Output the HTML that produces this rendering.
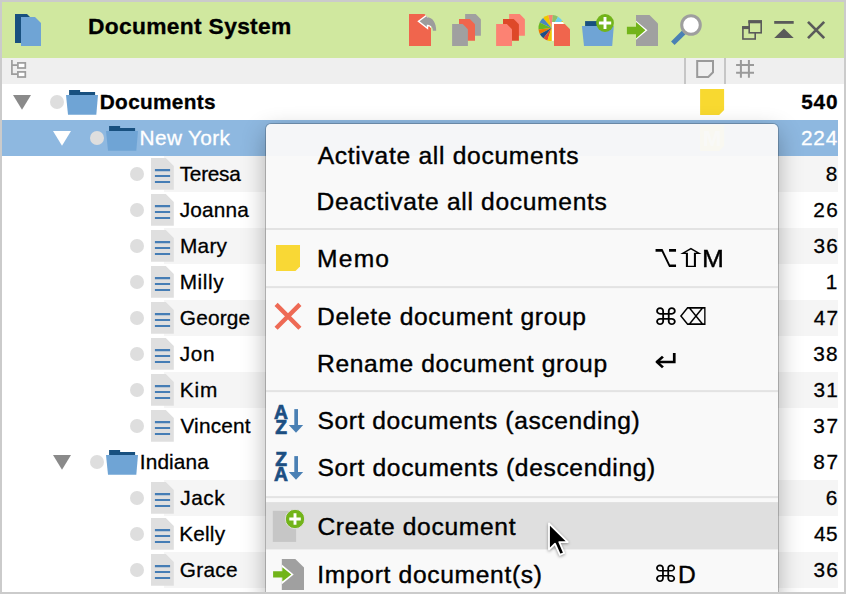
<!DOCTYPE html>
<html><head><meta charset="utf-8"><title>Document System</title>
<style>
html,body{margin:0;padding:0;}
body{width:846px;height:594px;background:#cbcbcb;position:relative;overflow:hidden;font-family:"Liberation Sans",sans-serif;color:#000;}
#win{position:absolute;left:2px;top:2px;width:842px;height:590px;background:#fff;overflow:hidden;}
#hdr{position:absolute;left:0;top:0;width:842px;height:56px;background:#d0e89f;}
#title{position:absolute;top:11px;-webkit-text-stroke:0.3px;font-weight:bold;font-size:22.8px;line-height:26px;white-space:nowrap;}
#cols{position:absolute;left:0;top:56px;width:842px;height:26px;background:#efefef;}
.row{position:absolute;left:0;width:836px;height:36px;}
.alt{position:absolute;top:0;height:36px;background:#f5f5f5;}
.sel{background:#8eb8e0;}
.t{position:absolute;-webkit-text-stroke:0.3px;font-size:20.8px;line-height:36px;top:0px;white-space:nowrap;}
.n{position:absolute;top:0px;-webkit-text-stroke:0.3px;font-size:20.8px;line-height:36px;white-space:nowrap;}
.b{font-weight:bold;}
.w{color:#fff;}
.dot{position:absolute;width:14px;height:14px;border-radius:7px;background:#dedede;top:11px;}
svg{position:absolute;overflow:visible;}
#menu{position:absolute;left:264px;top:122px;width:512px;height:480px;background:rgba(249,249,249,0.96);border-radius:5px;box-shadow:0 0 0 1px rgba(0,0,0,0.20),0 8px 24px rgba(0,0,0,0.30);}
.mi{position:absolute;-webkit-text-stroke:0.4px #000;font-size:24.6px;line-height:30px;white-space:nowrap;}
.sc{position:absolute;left:390px;font-size:24.5px;line-height:30px;white-space:nowrap;font-family:"Liberation Sans","DejaVu Sans",sans-serif;}
.gl{position:absolute;display:inline-block;font-family:"DejaVu Sans",sans-serif;font-size:24px;line-height:30px;transform-origin:0 0;white-space:nowrap;}
.sep{position:absolute;left:0;width:512px;height:2px;background:#e3e3e3;}
.hl{position:absolute;left:0;width:512px;background:#dcdcdc;}
</style></head><body>
<div id="win">
<div id="hdr">
<div id="title" class="" style="left:85.96px;letter-spacing:0.318px;">Document System</div>
<svg id="tb" width="842" height="56" viewBox="2 2 842 56" style="left:0;top:0">
<path d="M15 14h12l3 3v26h-15z" fill="#18507f"/><path d="M21 17h14l6 6v23h-20z" fill="#6fa4d5"/>
<defs><clipPath id="cp1"><path d="M409 14H424.5L431 20.5V45.9H409Z"/></clipPath><clipPath id="cp4"><circle cx="551.5" cy="28" r="13.1"/></clipPath></defs>
<path d="M409 14H424.5L431 20.5V45.9H409Z" fill="#f0654d"/>
<g clip-path="url(#cp1)"><path d="M419.6 21.3L426.8 16V17.2C432.6 17.2 436.2 22.5 436.2 30.7H432.9C432.9 27 430.6 24.7 426.8 24.7V26.9Z" fill="#fff" stroke="#fff" stroke-width="2.8"/></g>
<path d="M419.6 21.3L426.8 16V17.2C432.6 17.2 436.2 22.5 436.2 30.7H432.9C432.9 27 430.6 24.7 426.8 24.7V26.9Z" fill="#9c9c9c"/>
<path d="M465.1 14h10.6l5.2 5.2v16.6h-15.8z" fill="#a0a0a0"/>
<path d="M459 19h10.8l5.2 5.2v16.6h-16z" fill="#f0654d"/>
<path d="M452.1 24.1h10.6l5.2 5.2v16.6h-15.8z" fill="#a0a0a0"/>
<path d="M509.1 14h10.6l5.2 5.2v16.6h-15.8z" fill="#fc8273"/>
<path d="M503 19h10.7l5.2 5.2v16.6h-15.9z" fill="#de4829"/>
<path d="M496.1 24.1h10.7l5.2 5.2v16.6h-15.9z" fill="#fc8273"/>
<path d="M551.5 28L548.11 15.35A13.1 13.1 0 0 1 552.87 14.97z" fill="#fa8072"/>
<path d="M551.5 28L552.87 14.97A13.1 13.1 0 0 1 558.05 16.66z" fill="#8fc065"/>
<path d="M551.5 28L558.05 16.66A13.1 13.1 0 0 1 562.61 21.06z" fill="#6ccff0"/>
<path d="M551.5 28L562.61 21.06A13.1 13.1 0 0 1 551.50 41.10z" fill="#f2c500"/>
<path d="M551.5 28L543.08 17.96A13.1 13.1 0 0 1 548.11 15.35z" fill="#f2c500"/>
<path d="M551.5 28L539.63 22.46A13.1 13.1 0 0 1 543.08 17.96z" fill="#4a86c0"/>
<path d="M551.5 28L538.50 29.60A13.1 13.1 0 0 1 539.63 22.46z" fill="#6ab820"/>
<path d="M551.5 28L539.83 33.95A13.1 13.1 0 0 1 538.50 29.60z" fill="#f07800"/>
<path d="M551.5 28L543.43 38.32A13.1 13.1 0 0 1 539.83 33.95z" fill="#1d4f88"/>
<path d="M551.5 28L547.45 40.46A13.1 13.1 0 0 1 543.43 38.32z" fill="#e04830"/>
<path d="M551.5 28L551.50 41.10A13.1 13.1 0 0 1 547.45 40.46z" fill="#f2c500"/>
<g clip-path="url(#cp4)"><path d="M551.9 22h13.2l7 7v18h-20.2z" fill="#fff"/></g>
<path d="M554 24.1h10.8l5.2 5.2v16.6h-16z" fill="#f0654d"/>
<path d="M585.1 21.1h14v5h-14z" fill="#18507f"/><path d="M581.9 26h31.9l-1.6 19.9h-28.2z" fill="#6fa4d5"/>
<circle cx="605" cy="23" r="8.9" fill="#72b41a"/><path d="M605 17v12.1M598.9 23h12.3" stroke="#fff" stroke-width="2.9"/>
<path d="M636 15h13.5l8.5 8.5v22.4h-22z" fill="#a0a0a0"/>
<path d="M636 20.7L647.5 30.3L636 39.8z" fill="#fff"/>
<path d="M626.9 26.7h9.1v-4.7l9.4 8.3l-9.4 8.2v-4.3h-9.1z" fill="#72b41a"/>
<path d="M683.8 32.4l-11 10.9" stroke="#4a80b4" stroke-width="5"/><circle cx="691" cy="25" r="9.3" fill="#fff" stroke="#9e9e9e" stroke-width="3"/>
<g fill="#d0e89f" stroke="#5a5a5a" stroke-width="1.6"><rect x="742.9" y="27" width="12.3" height="12"/><path d="M742.1 27.6h14" stroke-width="3"/><rect x="749.2" y="21.1" width="12" height="11.7"/><path d="M748.4 21.8h13.6" stroke-width="3"/></g>
<path d="M774.2 22.4h19.5" stroke="#5a5a5a" stroke-width="2.8"/><path d="M774.2 38h19.5l-9.75-9.4z" fill="#5a5a5a"/>
<path d="M808 21.9l16.2 16.2M824.2 21.9l-16.2 16.2" stroke="#5a5a5a" stroke-width="2.7"/>
</svg>
</div>
<div id="cols"><svg width="842" height="26" viewBox="2 58 842 26" style="left:0;top:0">
<g fill="none" stroke="#9c9c9c" stroke-width="1.7"><path d="M11.9 60.1v14.1h5.2M11.9 65.2h5.2"/><rect x="17.9" y="62.9" width="7.4" height="5.1" fill="#fff"/><rect x="17.9" y="71.9" width="7.4" height="5.1" fill="#fff"/></g>
<path d="M685 58v26M725 58v26" stroke="#c6c6c6" stroke-width="2"/>
<path d="M697.2 61h15.8v11.3l-4.7 4.6h-11.1z" fill="none" stroke="#9a9a9a" stroke-width="2"/>
<path d="M740.9 60v17.8M748.9 60v17.8M736.1 65h17.9M736.1 72.8h17.9" stroke="#9a9a9a" stroke-width="2" fill="none"/>
</svg></div>
<div class="row" style="top:82px">
<svg width="18" height="36" style="left:11.1px;top:0"><path d="M0 10.9h18l-9 14.8z" fill="#8a8a8a"/></svg>
<div class="dot" style="left:48.4px"></div>
<svg width="34" height="36" style="left:63.9px;top:0"><path d="M3.1 6h11v2h15v3.5h-26z" fill="#18507f"/><path d="M0 10.9h32l-1.7 19.9h-28.3z" fill="#6fa4d5"/></svg>
<div class="t b" style="left:97.77px;letter-spacing:0.321px;">Documents</div>
<div class="n b" style="left:799.15px;letter-spacing:0.904px;">540</div>
</div>
<div class="row sel" style="top:118px">
<svg width="18" height="36" style="left:51.0px;top:0"><path d="M0 10.9h18l-9 14.8z" fill="#fff"/></svg>
<div class="dot" style="left:88.4px"></div>
<svg width="34" height="36" style="left:103.6px;top:0"><path d="M3.1 6h11v2h15v3.5h-26z" fill="#18507f"/><path d="M0 10.9h32l-1.7 19.9h-28.3z" fill="#6fa4d5"/></svg>
<div class="t w" style="left:137.6px;letter-spacing:0.353px;">New York</div>
<div class="n w" style="left:799.07px;letter-spacing:0.718px;">224</div>
</div>
<div class="row" style="top:154px">
<div class="alt" style="left:162.3px;width:673.7px"></div>
<div class="dot" style="left:128.3px"></div>
<svg width="24" height="36" style="left:149.1px;top:0"><path d="M0 2.1h14.8l8 8v23.7h-22.8z" fill="#dfdfdf"/><path d="M3.9 14.1h15.2M3.9 20h15.2M3.9 26h15.2" stroke="#457db5" stroke-width="2.1"/></svg>
<div class="t" style="left:177.71px;letter-spacing:-0.259px;">Teresa</div>
<div class="n" style="left:823.65px;letter-spacing:0px;">8</div>
</div>
<div class="row" style="top:190px">
<div class="dot" style="left:128.3px"></div>
<svg width="24" height="36" style="left:149.1px;top:0"><path d="M0 2.1h14.8l8 8v23.7h-22.8z" fill="#dfdfdf"/><path d="M3.9 14.1h15.2M3.9 20h15.2M3.9 26h15.2" stroke="#457db5" stroke-width="2.1"/></svg>
<div class="t" style="left:177.69px;letter-spacing:0.184px;">Joanna</div>
<div class="n" style="left:811.21px;letter-spacing:1.457px;">26</div>
</div>
<div class="row" style="top:226px">
<div class="alt" style="left:162.3px;width:673.7px"></div>
<div class="dot" style="left:128.3px"></div>
<svg width="24" height="36" style="left:149.1px;top:0"><path d="M0 2.1h14.8l8 8v23.7h-22.8z" fill="#dfdfdf"/><path d="M3.9 14.1h15.2M3.9 20h15.2M3.9 26h15.2" stroke="#457db5" stroke-width="2.1"/></svg>
<div class="t" style="left:178.09px;letter-spacing:0.209px;">Mary</div>
<div class="n" style="left:811.39px;letter-spacing:1.329px;">36</div>
</div>
<div class="row" style="top:262px">
<div class="dot" style="left:128.3px"></div>
<svg width="24" height="36" style="left:149.1px;top:0"><path d="M0 2.1h14.8l8 8v23.7h-22.8z" fill="#dfdfdf"/><path d="M3.9 14.1h15.2M3.9 20h15.2M3.9 26h15.2" stroke="#457db5" stroke-width="2.1"/></svg>
<div class="t" style="left:177.63px;letter-spacing:0.632px;">Milly</div>
<div class="n" style="left:823.84px;letter-spacing:0px;">1</div>
</div>
<div class="row" style="top:298px">
<div class="alt" style="left:162.3px;width:673.7px"></div>
<div class="dot" style="left:128.3px"></div>
<svg width="24" height="36" style="left:149.1px;top:0"><path d="M0 2.1h14.8l8 8v23.7h-22.8z" fill="#dfdfdf"/><path d="M3.9 14.1h15.2M3.9 20h15.2M3.9 26h15.2" stroke="#457db5" stroke-width="2.1"/></svg>
<div class="t" style="left:177.84px;letter-spacing:0.176px;">George</div>
<div class="n" style="left:811.85px;letter-spacing:1.02px;">47</div>
</div>
<div class="row" style="top:334px">
<div class="dot" style="left:128.3px"></div>
<svg width="24" height="36" style="left:149.1px;top:0"><path d="M0 2.1h14.8l8 8v23.7h-22.8z" fill="#dfdfdf"/><path d="M3.9 14.1h15.2M3.9 20h15.2M3.9 26h15.2" stroke="#457db5" stroke-width="2.1"/></svg>
<div class="t" style="left:177.65px;letter-spacing:0.706px;">Jon</div>
<div class="n" style="left:811.37px;letter-spacing:1.062px;">38</div>
</div>
<div class="row" style="top:370px">
<div class="alt" style="left:162.3px;width:673.7px"></div>
<div class="dot" style="left:128.3px"></div>
<svg width="24" height="36" style="left:149.1px;top:0"><path d="M0 2.1h14.8l8 8v23.7h-22.8z" fill="#dfdfdf"/><path d="M3.9 14.1h15.2M3.9 20h15.2M3.9 26h15.2" stroke="#457db5" stroke-width="2.1"/></svg>
<div class="t" style="left:177.64px;letter-spacing:0.883px;">Kim</div>
<div class="n" style="left:811.39px;letter-spacing:1.266px;">31</div>
</div>
<div class="row" style="top:406px">
<div class="dot" style="left:128.3px"></div>
<svg width="24" height="36" style="left:149.1px;top:0"><path d="M0 2.1h14.8l8 8v23.7h-22.8z" fill="#dfdfdf"/><path d="M3.9 14.1h15.2M3.9 20h15.2M3.9 26h15.2" stroke="#457db5" stroke-width="2.1"/></svg>
<div class="t" style="left:178.39px;letter-spacing:0.204px;">Vincent</div>
<div class="n" style="left:811.37px;letter-spacing:1.461px;">37</div>
</div>
<div class="row" style="top:442px">
<svg width="18" height="36" style="left:51.0px;top:0"><path d="M0 10.9h18l-9 14.8z" fill="#8a8a8a"/></svg>
<div class="dot" style="left:88.4px"></div>
<svg width="34" height="36" style="left:103.6px;top:0"><path d="M3.1 6h11v2h15v3.5h-26z" fill="#18507f"/><path d="M0 10.9h32l-1.7 19.9h-28.3z" fill="#6fa4d5"/></svg>
<div class="t" style="left:137.82px;letter-spacing:0.131px;">Indiana</div>
<div class="n" style="left:811.37px;letter-spacing:1.463px;">87</div>
</div>
<div class="row" style="top:478px">
<div class="alt" style="left:162.3px;width:673.7px"></div>
<div class="dot" style="left:128.3px"></div>
<svg width="24" height="36" style="left:149.1px;top:0"><path d="M0 2.1h14.8l8 8v23.7h-22.8z" fill="#dfdfdf"/><path d="M3.9 14.1h15.2M3.9 20h15.2M3.9 26h15.2" stroke="#457db5" stroke-width="2.1"/></svg>
<div class="t" style="left:178.2px;letter-spacing:0.569px;">Jack</div>
<div class="n" style="left:823.68px;letter-spacing:0px;">6</div>
</div>
<div class="row" style="top:514px">
<div class="dot" style="left:128.3px"></div>
<svg width="24" height="36" style="left:149.1px;top:0"><path d="M0 2.1h14.8l8 8v23.7h-22.8z" fill="#dfdfdf"/><path d="M3.9 14.1h15.2M3.9 20h15.2M3.9 26h15.2" stroke="#457db5" stroke-width="2.1"/></svg>
<div class="t" style="left:177.35px;letter-spacing:0.155px;">Kelly</div>
<div class="n" style="left:811.88px;letter-spacing:0.549px;">45</div>
</div>
<div class="row" style="top:550px">
<div class="alt" style="left:162.3px;width:673.7px"></div>
<div class="dot" style="left:128.3px"></div>
<svg width="24" height="36" style="left:149.1px;top:0"><path d="M0 2.1h14.8l8 8v23.7h-22.8z" fill="#dfdfdf"/><path d="M3.9 14.1h15.2M3.9 20h15.2M3.9 26h15.2" stroke="#457db5" stroke-width="2.1"/></svg>
<div class="t" style="left:177.69px;letter-spacing:0.314px;">Grace</div>
<div class="n" style="left:811.39px;letter-spacing:1.329px;">36</div>
</div>
<svg width="842" height="40" viewBox="2 84 842 40" style="left:0;top:82px"><path d="M700.1 89.1h24v20.8l-5 5h-19z" fill="#f8d930"/><path d="M700.1 125.1h24v20.8l-5 5h-19z" fill="#f8d930"/><text x="712.1" y="146" text-anchor="middle" font-family="Liberation Sans, sans-serif" font-size="22" font-weight="bold" fill="#fdf6d0">M</text></svg>
<div id="menu">
<svg width="512" height="480" viewBox="266 124 512 480" style="left:0;top:0"><rect x="266" y="502.1" width="512" height="47.3" fill="#dfdfdf"/><rect x="266" y="228" width="512" height="2" fill="#e3e3e3"/><rect x="266" y="286.1" width="512" height="2" fill="#e3e3e3"/><rect x="266" y="390.1" width="512" height="2" fill="#e3e3e3"/><rect x="266" y="496.1" width="512" height="2" fill="#e3e3e3"/></svg>
<div class="mi" style="left:51.71px;letter-spacing:0.707px;top:17.0px">Activate all documents</div>
<div class="mi" style="left:50.44px;letter-spacing:0.678px;top:63.0px">Deactivate all documents</div>
<div class="mi" style="left:51.11px;letter-spacing:1.188px;top:120.0px">Memo</div>
<div class="mi" style="left:435.5px;letter-spacing:0px;top:120.0px;transform:scaleX(1.07);transform-origin:0 0">M</div>
<div class="mi" style="left:51.11px;letter-spacing:0.662px;top:178.0px">Delete document group</div>
<div class="mi" style="left:51.11px;letter-spacing:0.622px;top:225.0px">Rename document group</div>
<div class="mi" style="left:51.4px;letter-spacing:0.593px;top:282.0px">Sort documents (ascending)</div>
<div class="mi" style="left:51.4px;letter-spacing:0.638px;top:329.0px">Sort documents (descending)</div>
<div class="mi" style="left:51.39px;letter-spacing:0.674px;top:388.0px">Create document</div>
<div class="mi" style="left:51.34px;letter-spacing:0.673px;top:436.0px">Import document(s)</div>
<div class="mi" style="left:412.1px;letter-spacing:0px;top:436.0px">D</div>
<span class="gl" style="left:388.31px;top:112.96px;transform:scale(0.854,1.302)">⌥</span>
<span class="gl" style="left:406.50px;top:118.37px;transform:scale(1.765,1.067)">⇧</span>
<span class="gl" style="left:387.27px;top:178.57px;transform:scale(1.078,0.975)">⌘</span>
<span class="gl" style="left:413.90px;top:178.19px;transform:scale(0.797,0.992)">⌫</span>
<span class="gl" style="left:388.28px;top:219.40px;transform:scale(1.372,1.200)">↵</span>
<span class="gl" style="left:387.25px;top:436.35px;transform:scale(1.050,0.959)">⌘</span>
<svg width="512" height="480" viewBox="266 124 512 480" style="left:0;top:0">
<path d="M276 245h24v21.5l-4.5 4.5h-19.5z" fill="#f9d835"/>
<path d="M276.1 304.4l23.8 23.8M299.9 304.4l-23.8 23.8" stroke="#ee6a55" stroke-width="4.4"/>
<text x="281.05" y="418.70000000000005" font-family="Liberation Sans, sans-serif" font-weight="bold" font-size="19.3" fill="#1c4f82" stroke="#1c4f82" stroke-width="0.7" text-anchor="middle">A</text><text x="281.05" y="434.3" font-family="Liberation Sans, sans-serif" font-weight="bold" font-size="19.3" fill="#1c4f82" stroke="#1c4f82" stroke-width="0.7" text-anchor="middle">Z</text><path d="M296.15 409.1v18" stroke="#4a80b4" stroke-width="3.7"/><path d="M288.8 425.1h14.4l-7.2 7.7z" fill="#4a80b4"/>
<text x="281.05" y="465.70000000000005" font-family="Liberation Sans, sans-serif" font-weight="bold" font-size="19.3" fill="#1c4f82" stroke="#1c4f82" stroke-width="0.7" text-anchor="middle">Z</text><text x="281.05" y="481.3" font-family="Liberation Sans, sans-serif" font-weight="bold" font-size="19.3" fill="#1c4f82" stroke="#1c4f82" stroke-width="0.7" text-anchor="middle">A</text><path d="M296.15 456.1v18" stroke="#4a80b4" stroke-width="3.7"/><path d="M288.8 472.1h14.4l-7.2 7.7z" fill="#4a80b4"/>
<rect x="272.8" y="510.8" width="23.3" height="31.1" fill="#c6c6c6"/><circle cx="295" cy="519" r="9.7" fill="#72b41a" stroke="#dedede" stroke-width="1"/><path d="M295 513.3v11.5M289.3 519h11.5" stroke="#fff" stroke-width="2.9"/>
<path d="M281.8 558.9h13.5l8.7 8.7v22.3h-22.2z" fill="#a0a0a0"/>
<path d="M281.8 564.6l11.9 9.8l-11.9 9.8z" fill="#fff"/>
<path d="M273.1 571.2h9.2v-4l9 7.2l-9 7.1v-4h-9.2z" fill="#72b41a"/>
</svg>
</div>
<svg width="30" height="40" viewBox="0 0 30 40" style="left:545px;top:519px"><path transform="translate(2 2.5) scale(0.965) translate(-2 -2.5)" d="M2 2.5v27l6.3-6 5 11.5 4.4-1.9-5-11.3h8.8z" fill="#000" stroke="#fff" stroke-width="1.9" stroke-linejoin="round" style="filter:drop-shadow(0 1px 1.5px rgba(0,0,0,.4))"/></svg>
</div></body></html>
